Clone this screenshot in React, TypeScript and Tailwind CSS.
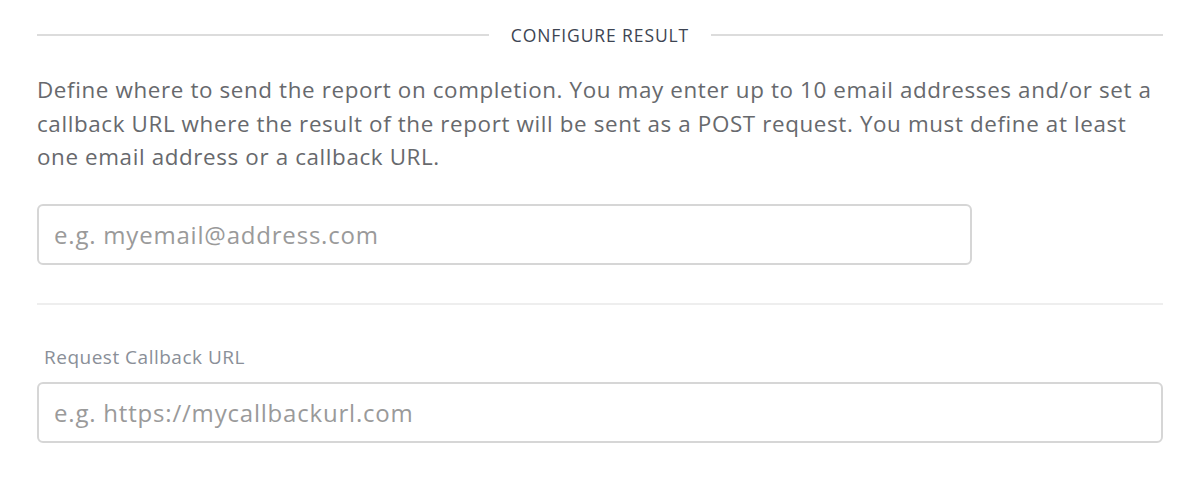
import React from "react";

const font = { fontFamily: '"Open Sans", "Noto Sans", sans-serif' };

const App: React.FC = () => {
  return (
    <div className="min-h-[489px] w-full bg-white px-[37px] pt-[23px]" style={font}>
      {/* Section heading */}
      <div className="flex items-center gap-[22px]">
        <div className="h-[2px] flex-1 bg-[#dcdcdc]" />
        <h3 className="text-[17.5px] leading-[24px] tracking-[0.9px] uppercase text-[#3d4452]">Configure Result</h3>
        <div className="h-[2px] flex-1 bg-[#dcdcdc]" />
      </div>

      <p className="mt-[26px] text-[22.4px] leading-[33.6px] tracking-[0.62px] text-[#67696d]">
        Define where to send the report on completion. You may enter up to 10 email addresses and/or
        set a callback URL where the result of the report will be sent as a POST request. You must
        define at least one email address or a callback URL.
      </p>

      <div className="mt-[30px] w-[935px]">
        <input
          type="text"
          placeholder="e.g. myemail@address.com"
          className="h-[61px] w-full rounded-[6px] border-2 border-[#d6d6d6] px-[15px] text-[24px] tracking-[0.8px] text-[#555] placeholder:text-[#9a9a9a] outline-none"
        />
      </div>

      <div className="mt-[38px] h-[2px] w-full bg-[#eeeeee]" />

      <div className="mt-[40px]">
        <label className="block pl-[7px] text-[19px] leading-[24px] tracking-[0.5px] text-[#8a8f98]">Request Callback URL</label>
        <input
          type="text"
          placeholder="e.g. https://mycallbackurl.com"
          className="mt-[13px] h-[61px] w-full rounded-[6px] border-2 border-[#d6d6d6] px-[15px] text-[24px] tracking-[0.8px] text-[#555] placeholder:text-[#9a9a9a] outline-none"
        />
      </div>
    </div>
  );
};

export default App;
